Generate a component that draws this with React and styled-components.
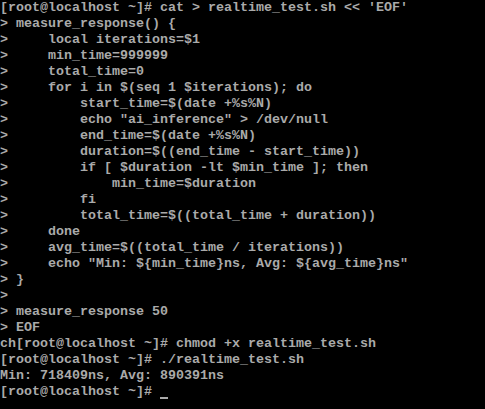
import React from 'react';
import styled, { createGlobalStyle } from 'styled-components';

const GlobalStyle = createGlobalStyle`
  html, body {
    margin: 0;
    padding: 0;
    background: #000;
  }
`;

const Screen = styled.div`
  width: 485px;
  height: 409px;
  background: #000;
  color: #aaaaaa;
  font-family: 'Liberation Mono', 'DejaVu Sans Mono', monospace;
  font-size: 13.333px;
  font-weight: bold;
  line-height: 16px;
  overflow: hidden;
  display: flex;
  flex-direction: column;
`;

const Line = styled.div`
  white-space: pre;
  height: 16px;
`;

const Cursor = styled.span`
  display: inline-block;
  width: 8px;
  height: 16px;
  vertical-align: top;
  position: relative;
  &::after {
    content: '';
    position: absolute;
    left: 0;
    right: 0;
    bottom: 1px;
    height: 2px;
    background: #aaaaaa;
  }
`;

const lines = [
  "[root@localhost ~]# cat > realtime_test.sh << 'EOF'",
  '> measure_response() {',
  '>     local iterations=$1',
  '>     min_time=999999',
  '>     total_time=0',
  '>     for i in $(seq 1 $iterations); do',
  '>         start_time=$(date +%s%N)',
  '>         echo "ai_inference" > /dev/null',
  '>         end_time=$(date +%s%N)',
  '>         duration=$((end_time - start_time))',
  '>         if [ $duration -lt $min_time ]; then',
  '>             min_time=$duration',
  '>         fi',
  '>         total_time=$((total_time + duration))',
  '>     done',
  '>     avg_time=$((total_time / iterations))',
  '>     echo "Min: ${min_time}ns, Avg: ${avg_time}ns"',
  '> }',
  '>',
  '> measure_response 50',
  '> EOF',
  'ch[root@localhost ~]# chmod +x realtime_test.sh',
  '[root@localhost ~]# ./realtime_test.sh',
  'Min: 718409ns, Avg: 890391ns',
];

const App = () => (
  <>
    <GlobalStyle />
    <Screen>
      {lines.map((text, i) => (
        <Line key={i}>{text}</Line>
      ))}
      <Line>
        {'[root@localhost ~]# '}
        <Cursor />
      </Line>
    </Screen>
  </>
);

export default App;
